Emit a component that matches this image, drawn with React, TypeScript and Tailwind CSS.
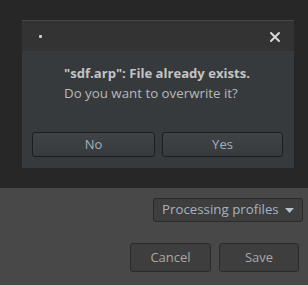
import React from "react";

const font = { fontFamily: '"Open Sans", "Noto Sans", sans-serif' };

export default function App() {
  return (
    <div className="w-[308px] h-[285px] flex flex-col overflow-hidden" style={font}>
      <div className="h-[188px] bg-[#272727] pt-[20px] pl-[22px] flex">
        <div className="w-[272px] h-[148px] flex flex-col bg-[#363a3d]">
          <div className="h-[31px] bg-[#333333] border-t border-[#474747] flex items-center justify-between pl-[17px] pr-[13px]">
            <div className="w-[3px] h-[3px] bg-[#d0d0d0] rounded-[1px] mt-[1px]" />
            <svg width="12" height="12" viewBox="0 0 12 12" className="mt-[1px]">
              <path d="M2 2 L10 10 M10 2 L2 10" stroke="#d8d8d8" strokeWidth="2" strokeLinecap="round" />
            </svg>
          </div>
          <div className="flex-1 flex flex-col pt-[12px] pl-[42px]">
            <div className="text-[13.1px] leading-[20px] font-bold text-[#c4c4c4]">"sdf.arp": File already exists.</div>
            <div className="text-[13.3px] leading-[20px] text-[#b8b8b8]">Do you want to overwrite it?</div>
          </div>
          <div className="flex gap-[7px] pl-[10px] pb-[11px]">
            <button className="w-[123px] h-[25px] rounded-[3px] border border-[#1c1d1e] bg-gradient-to-b from-[#3f4346] to-[#373b3e] text-[13px] text-[#a6b0ba]">No</button>
            <button className="w-[121px] h-[25px] rounded-[3px] border border-[#1c1d1e] bg-gradient-to-b from-[#3f4346] to-[#373b3e] text-[13px] text-[#a6b0ba]">Yes</button>
          </div>
        </div>
      </div>
      <div className="flex-1 bg-[#484848] flex flex-col items-end">
        <button className="mt-[10px] mr-[5px] w-[150px] h-[24px] rounded-[3px] border border-[#2a2a2a] bg-[#3e3e3e] text-[13.3px] text-[#a4b2c0] flex items-center pl-[8px] gap-[6px]">
          <span>Processing profiles</span>
          <svg width="9" height="5" viewBox="0 0 9 5"><path d="M0 0 L9 0 L4.5 5 Z" fill="#b8c0c8" /></svg>
        </button>
        <div className="mt-[21px] mr-[9px] flex gap-[8px]">
          <button className="w-[81px] h-[29px] rounded-[3px] border border-[#2a2a2a] bg-[#3e3e3e] text-[13px] text-[#a8a8a8]">Cancel</button>
          <button className="w-[80px] h-[29px] rounded-[3px] border border-[#2a2a2a] bg-[#3e3e3e] text-[13px] text-[#a8a8a8]">Save</button>
        </div>
      </div>
    </div>
  );
}
